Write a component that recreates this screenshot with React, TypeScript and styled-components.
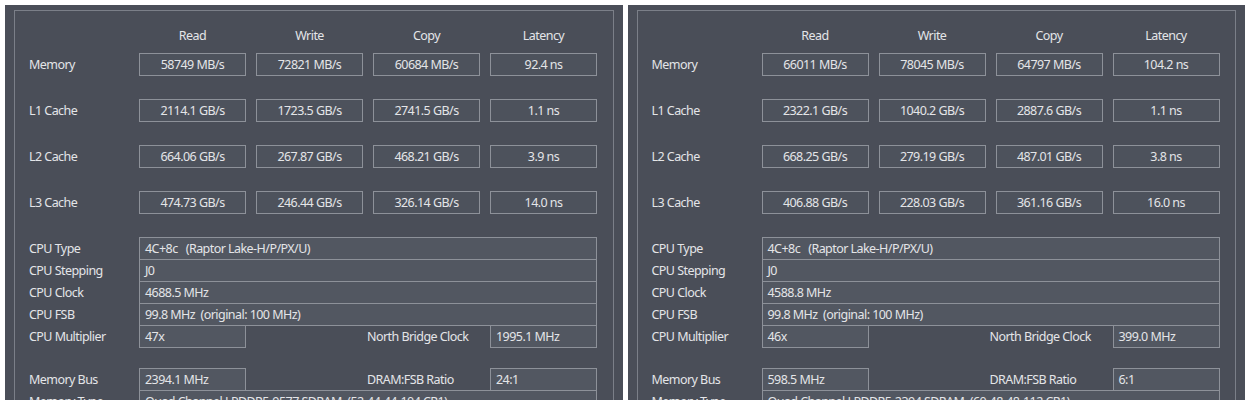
import React from "react";
import styled, { createGlobalStyle } from "styled-components";

const Global = createGlobalStyle`
  html, body { margin: 0; padding: 0; background: #ffffff; }
  body {
    font-family: "Noto Sans", "Open Sans", "DejaVu Sans", sans-serif;
    font-size: 12.5px;
    letter-spacing: -0.55px;
    overflow: hidden;
  }
`;

const Page = styled.div`
  display: flex;
  gap: 5px;
  padding: 5px 5px 0 5px;
  height: 395px;
  overflow: hidden;
`;

const Panel = styled.div`
  flex: 1;
  background: #4a4e58;
  padding: 5px 9px 0 9px;
  display: flex;
  flex-direction: column;
`;

const Frame = styled.div`
  flex: 1;
  border: 1px solid #7b7f88;
  border-bottom: none;
  padding: 17px 0 0 14px;
  color: #e4e5e8;
`;

const BenchGrid = styled.div`
  display: grid;
  grid-template-columns: 100px repeat(4, 107px);
  column-gap: 10px;
  row-gap: 23px;
  align-items: center;
`;

const HeadRow = styled.div`
  display: contents;
`;

const ColHead = styled.div`
  text-align: center;
  height: 16px;
  line-height: 16px;
  margin-bottom: -14px;
`;

const RowLabel = styled.div`
  line-height: 16px;
`;

const BenchBox = styled.div`
  height: 23px;
  box-sizing: border-box;
  border: 1px solid #8d9199;
  background: #4d525c;
  display: flex;
  align-items: center;
  justify-content: center;
  white-space: nowrap;
`;

const InfoSection = styled.div`
  display: flex;
  flex-direction: column;
  margin-top: 23px;
`;

const InfoRow = styled.div<{ $gapTop?: number }>`
  display: flex;
  align-items: center;
  height: 23px;
  margin-top: ${(p) => (p.$gapTop !== undefined ? `${p.$gapTop}px` : "-1px")};
  &:first-child { margin-top: 0; }
`;

const InfoLabel = styled.div`
  width: 110px;
  flex: none;
`;

const ValueBox = styled.div<{ $wide?: boolean }>`
  box-sizing: border-box;
  height: 23px;
  width: ${(p) => (p.$wide ? "458px" : "107px")};
  flex: none;
  border: 1px solid #8d9199;
  background: #525761;
  padding: 0 5px;
  display: flex;
  align-items: center;
  white-space: pre;
  overflow: hidden;
`;

const MidLabel = styled.div`
  width: 244px;
  flex: none;
  box-sizing: border-box;
  padding-left: 121px;
  white-space: nowrap;
`;

type Data = {
  bench: [string, string, string, string, string][];
  type: string;
  stepping: string;
  clock: string;
  fsb: string;
  mult: string;
  nb: string;
  bus: string;
  ratio: string;
  memType: string;
};

const left: Data = {
  bench: [
    ["Memory", "58749 MB/s", "72821 MB/s", "60684 MB/s", "92.4 ns"],
    ["L1 Cache", "2114.1 GB/s", "1723.5 GB/s", "2741.5 GB/s", "1.1 ns"],
    ["L2 Cache", "664.06 GB/s", "267.87 GB/s", "468.21 GB/s", "3.9 ns"],
    ["L3 Cache", "474.73 GB/s", "246.44 GB/s", "326.14 GB/s", "14.0 ns"],
  ],
  type: "4C+8c   (Raptor Lake-H/P/PX/U)",
  stepping: "J0",
  clock: "4688.5 MHz",
  fsb: "99.8 MHz  (original: 100 MHz)",
  mult: "47x",
  nb: "1995.1 MHz",
  bus: "2394.1 MHz",
  ratio: "24:1",
  memType: "Quad Channel LPDDR5-9577 SDRAM  (52-44-44-104 CR1)",
};

const right: Data = {
  bench: [
    ["Memory", "66011 MB/s", "78045 MB/s", "64797 MB/s", "104.2 ns"],
    ["L1 Cache", "2322.1 GB/s", "1040.2 GB/s", "2887.6 GB/s", "1.1 ns"],
    ["L2 Cache", "668.25 GB/s", "279.19 GB/s", "487.01 GB/s", "3.8 ns"],
    ["L3 Cache", "406.88 GB/s", "228.03 GB/s", "361.16 GB/s", "16.0 ns"],
  ],
  type: "4C+8c   (Raptor Lake-H/P/PX/U)",
  stepping: "J0",
  clock: "4588.8 MHz",
  fsb: "99.8 MHz  (original: 100 MHz)",
  mult: "46x",
  nb: "399.0 MHz",
  bus: "598.5 MHz",
  ratio: "6:1",
  memType: "Quad Channel LPDDR5-2394 SDRAM  (60-48-48-112 CR1)",
};

const heads = ["Read", "Write", "Copy", "Latency"];

function BenchPanel({ d }: { d: Data }) {
  return (
    <Panel>
      <Frame>
        <BenchGrid>
          <HeadRow>
            <ColHead />
            {heads.map((h) => (
              <ColHead key={h}>{h}</ColHead>
            ))}
          </HeadRow>
          {d.bench.map((r) => (
            <HeadRow key={r[0]}>
              <RowLabel>{r[0]}</RowLabel>
              {r.slice(1).map((v, i) => (
                <BenchBox key={i}>{v}</BenchBox>
              ))}
            </HeadRow>
          ))}
        </BenchGrid>
        <InfoSection>
          <InfoRow>
            <InfoLabel>CPU Type</InfoLabel>
            <ValueBox $wide>{d.type}</ValueBox>
          </InfoRow>
          <InfoRow>
            <InfoLabel>CPU Stepping</InfoLabel>
            <ValueBox $wide>{d.stepping}</ValueBox>
          </InfoRow>
          <InfoRow>
            <InfoLabel>CPU Clock</InfoLabel>
            <ValueBox $wide>{d.clock}</ValueBox>
          </InfoRow>
          <InfoRow>
            <InfoLabel>CPU FSB</InfoLabel>
            <ValueBox $wide>{d.fsb}</ValueBox>
          </InfoRow>
          <InfoRow>
            <InfoLabel>CPU Multiplier</InfoLabel>
            <ValueBox>{d.mult}</ValueBox>
            <MidLabel>North Bridge Clock</MidLabel>
            <ValueBox>{d.nb}</ValueBox>
          </InfoRow>
          <InfoRow $gapTop={20}>
            <InfoLabel>Memory Bus</InfoLabel>
            <ValueBox>{d.bus}</ValueBox>
            <MidLabel>DRAM:FSB Ratio</MidLabel>
            <ValueBox>{d.ratio}</ValueBox>
          </InfoRow>
          <InfoRow>
            <InfoLabel>Memory Type</InfoLabel>
            <ValueBox $wide>{d.memType}</ValueBox>
          </InfoRow>
        </InfoSection>
      </Frame>
    </Panel>
  );
}

export default function App() {
  return (
    <>
      <Global />
      <Page>
        <BenchPanel d={left} />
        <BenchPanel d={right} />
      </Page>
    </>
  );
}
